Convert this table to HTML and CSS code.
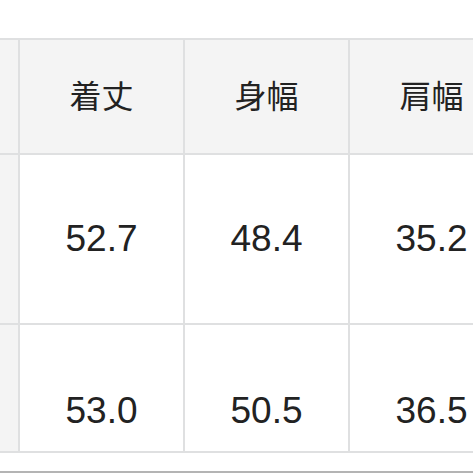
FILE: index.html
```html
<!DOCTYPE html>
<html lang="ja">
<head>
<meta charset="utf-8">
<link rel="stylesheet" href="styles.css">
</head>
<body>
<div class="page">
  <div class="table">
    <div class="cell side"></div>
    <div class="cell head">着丈</div>
    <div class="cell head">身幅</div>
    <div class="cell head">肩幅</div>

    <div class="cell side"></div>
    <div class="cell num">52.7</div>
    <div class="cell num">48.4</div>
    <div class="cell num">35.2</div>

    <div class="cell side"></div>
    <div class="cell num low">53.0</div>
    <div class="cell num low">50.5</div>
    <div class="cell num low">36.5</div>
  </div>
  <div class="rule"></div>
</div>
</body>
</html>
```
FILE: styles.css
```css
html, body {
  margin: 0;
  padding: 0;
  background: #ffffff;
  overflow: hidden;
}
.page {
  width: 473px;
  height: 473px;
  padding-top: 38px;
  box-sizing: border-box;
  overflow: hidden;
}
.table {
  display: grid;
  grid-template-columns: 18px 163px 163px 163px;
  grid-template-rows: 113px 168px 126px;
  gap: 2px;
  padding: 2px 0;
  background: #dfe0e1;
  width: 515px;
}
.cell {
  display: flex;
  align-items: center;
  justify-content: center;
  background: #ffffff;
  color: #222222;
  box-sizing: border-box;
}
.side {
  background: #f4f4f4;
}
.head {
  background: #f4f4f4;
  font-family: "Noto Sans CJK JP", sans-serif;
  font-size: 32px;
  padding-bottom: 6px;
}
.num {
  font-family: "Liberation Sans", Arial, sans-serif;
  font-size: 37px;
}
.low {
  padding-top: 46px;
}
.rule {
  margin-top: 18px;
  height: 2px;
  background: #b4b4b4;
}
```
